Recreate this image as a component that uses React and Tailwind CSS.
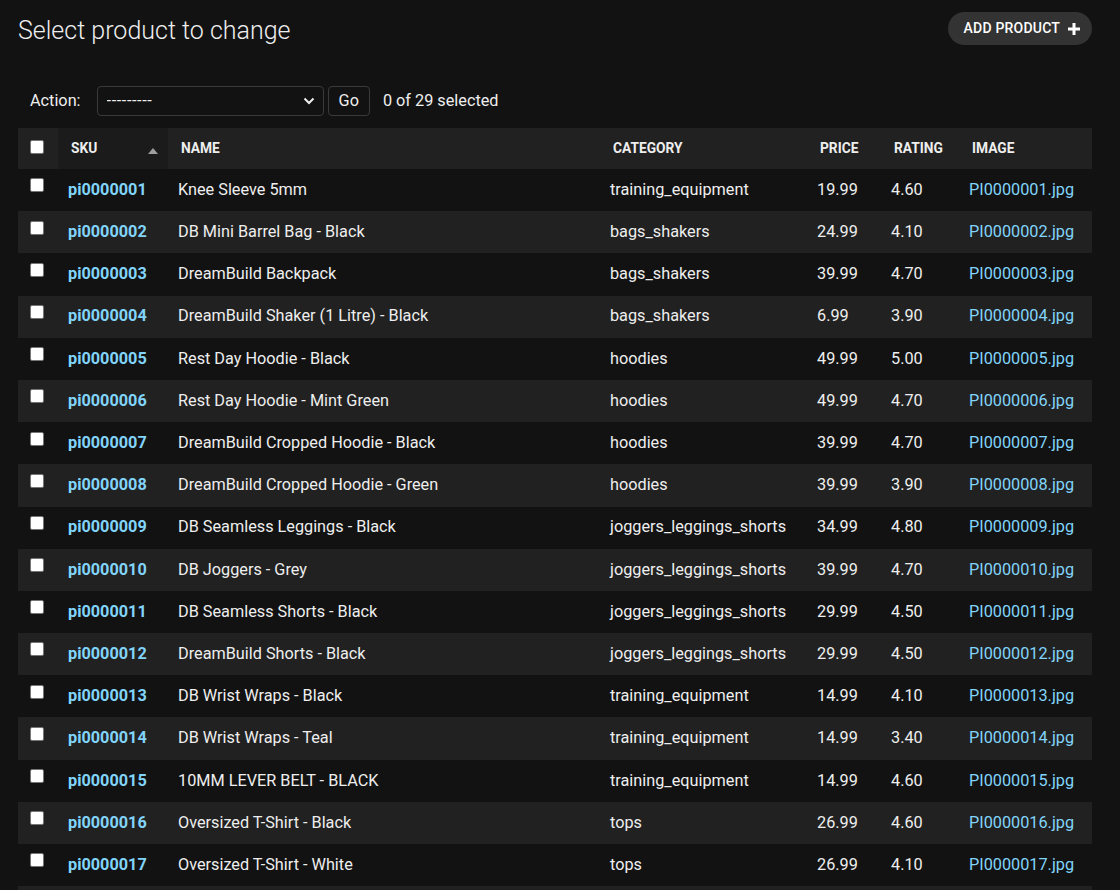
import React, { useState } from 'react';

const PRODUCTS = [
  ['pi0000001', 'Knee Sleeve 5mm', 'training_equipment', '19.99', '4.60'],
  ['pi0000002', 'DB Mini Barrel Bag - Black', 'bags_shakers', '24.99', '4.10'],
  ['pi0000003', 'DreamBuild Backpack', 'bags_shakers', '39.99', '4.70'],
  ['pi0000004', 'DreamBuild Shaker (1 Litre) - Black', 'bags_shakers', '6.99', '3.90'],
  ['pi0000005', 'Rest Day Hoodie - Black', 'hoodies', '49.99', '5.00'],
  ['pi0000006', 'Rest Day Hoodie - Mint Green', 'hoodies', '49.99', '4.70'],
  ['pi0000007', 'DreamBuild Cropped Hoodie - Black', 'hoodies', '39.99', '4.70'],
  ['pi0000008', 'DreamBuild Cropped Hoodie - Green', 'hoodies', '39.99', '3.90'],
  ['pi0000009', 'DB Seamless Leggings - Black', 'joggers_leggings_shorts', '34.99', '4.80'],
  ['pi0000010', 'DB Joggers - Grey', 'joggers_leggings_shorts', '39.99', '4.70'],
  ['pi0000011', 'DB Seamless Shorts - Black', 'joggers_leggings_shorts', '29.99', '4.50'],
  ['pi0000012', 'DreamBuild Shorts - Black', 'joggers_leggings_shorts', '29.99', '4.50'],
  ['pi0000013', 'DB Wrist Wraps - Black', 'training_equipment', '14.99', '4.10'],
  ['pi0000014', 'DB Wrist Wraps - Teal', 'training_equipment', '14.99', '3.40'],
  ['pi0000015', '10MM LEVER BELT - BLACK', 'training_equipment', '14.99', '4.60'],
  ['pi0000016', 'Oversized T-Shirt - Black', 'tops', '26.99', '4.60'],
  ['pi0000017', 'Oversized T-Shirt - White', 'tops', '26.99', '4.10'],
];

function Check({ checked, onChange }) {
  return (
    <input
      type="checkbox"
      checked={checked}
      onChange={onChange}
      className="h-[14px] w-[14px] appearance-none rounded-[2px] border border-[#767676] bg-white checked:bg-[#81d4fa] align-top"
    />
  );
}

export default function App() {
  const [selected, setSelected] = useState({});
  const count = Object.values(selected).filter(Boolean).length;

  function toggle(sku) {
    setSelected(prev => ({ ...prev, [sku]: !prev[sku] }));
  }

  return (
    <div className="h-[890px] bg-[#121212] px-[18px] text-[#eeeeee] overflow-hidden" style={{ fontFamily: 'Roboto, "Liberation Sans", sans-serif' }}>
      <div className="flex items-start justify-between pt-[12px]">
        <h1 className="pt-[4px] text-[25px] font-light leading-[30px] text-[#eeeeee]">Select product to change</h1>
        <a href="#" className="mr-[10px] flex h-[33px] items-center gap-[8px] rounded-full bg-[#333333] pl-[16px] pr-[12px] text-[14px] font-medium tracking-[0.2px] text-white">
          ADD PRODUCT
          <svg width="12" height="12" viewBox="0 0 12 12">
            <path d="M4.5 0h3v4.5H12v3H7.5V12h-3V7.5H0v-3h4.5z" fill="#fff" />
          </svg>
        </a>
      </div>

      <div className="mt-[40px] flex items-center pl-[12px] text-[16.25px]">
        <label className="mr-[16px]">Action:</label>
        <div className="relative">
          <select className="h-[30px] w-[227px] appearance-none rounded-[4px] border border-[#3a3a3a] bg-[#121212] pl-[9px] text-[16.25px] tracking-[0.6px] text-[#eeeeee]">
            <option>---------</option>
          </select>
          <svg className="pointer-events-none absolute right-[9px] top-[11px]" width="12" height="8" viewBox="0 0 12 8">
            <path d="M1.5 1.5L6 6l4.5-4.5" stroke="#eee" strokeWidth="2" fill="none" />
          </svg>
        </div>
        <button className="ml-[4px] h-[30px] rounded-[4px] border border-[#3a3a3a] px-[10px] text-[16.25px]">Go</button>
        <span className="ml-[13px]">{count} of 29 selected</span>
      </div>

      <table className="mt-[12px] w-[1074px] table-fixed border-collapse text-[16.25px]">
        <colgroup>
          <col className="w-[40px]" />
          <col className="w-[110px]" />
          <col className="w-[432px]" />
          <col className="w-[207px]" />
          <col className="w-[74px]" />
          <col className="w-[78px]" />
          <col className="w-[133px]" />
        </colgroup>
        <thead>
          <tr className="h-[41px] bg-[#212121] text-left text-[13.75px] font-bold text-[#eeeeee]">
            <th className="pl-[12px] align-top pt-[12px]"><Check /></th>
            <th className="relative bg-[#1b1b1b] pl-[13px]">
              SKU
              <span className="absolute right-[10px] top-[20px] h-0 w-0 border-x-[5px] border-b-[6px] border-x-transparent border-b-[#9e9e9e]" />
            </th>
            <th className="pl-[13px]">NAME</th>
            <th className="pl-[13px]">CATEGORY</th>
            <th className="pl-[13px]">PRICE</th>
            <th className="pl-[13px]">RATING</th>
            <th className="pl-[13px]">IMAGE</th>
          </tr>
        </thead>
        <tbody>
          {PRODUCTS.map((p, i) => (
            <tr key={p[0]} className={`h-[42.2px] ${i % 2 === 1 ? 'bg-[#212121]' : 'bg-[#121212]'}`}>
              <td className="pl-[12px] pt-[1px] align-middle"><Check checked={!!selected[p[0]]} onChange={() => toggle(p[0])} /></td>
              <td className="pl-[10px]"><a href="#" className="font-bold text-[#81d4fa]">{p[0]}</a></td>
              <td className="pl-[10px]">{p[1]}</td>
              <td className="pl-[10px]">{p[2]}</td>
              <td className="pl-[10px]">{p[3]}</td>
              <td className="pl-[10px]">{p[4]}</td>
              <td className="pl-[10px]"><a href="#" className="text-[#81d4fa]">{p[0].toUpperCase()}.jpg</a></td>
            </tr>
          ))}
          <tr className="h-[42.2px] bg-[#212121]"><td colSpan={7} /></tr>
        </tbody>
      </table>
    </div>
  );
}
